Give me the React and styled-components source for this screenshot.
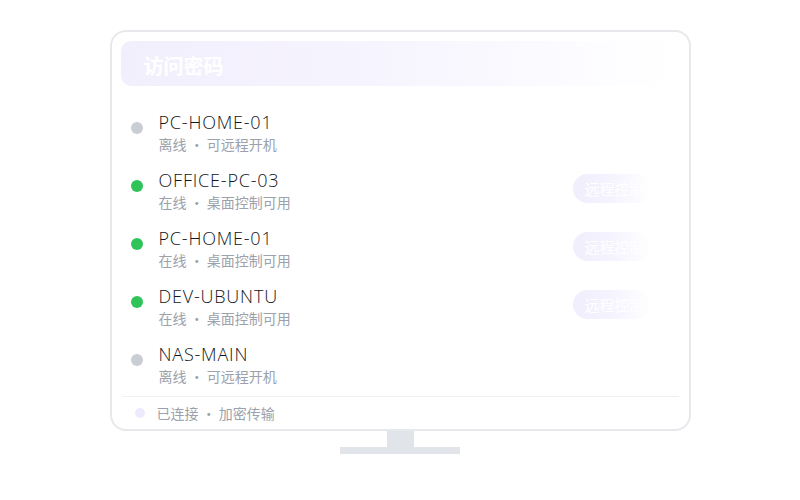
import React from 'react'
import styled, { createGlobalStyle } from 'styled-components'

const Global = createGlobalStyle`
  body {
    margin: 0;
    background: #fff;
    font-family: 'Noto Sans', 'Noto Sans CJK SC', sans-serif;
  }
`

const Stage = styled.div`
  width: 800px;
  height: 500px;
  padding-top: 30px;
  box-sizing: border-box;
  display: flex;
  flex-direction: column;
  align-items: center;
`

const Screen = styled.div`
  width: 581px;
  height: 401px;
  box-sizing: border-box;
  border: 2px solid #e6e8eb;
  border-radius: 16px;
  padding: 9px 10px 0 9px;
  display: flex;
  flex-direction: column;
  background: #fff;
`

const Header = styled.div`
  height: 45px;
  border-radius: 10px;
  background: linear-gradient(90deg, #f2effd 0%, #f6f4fe 45%, #fdfcff 85%, #ffffff 100%);
  display: flex;
  align-items: center;
  padding: 3px 0 0 23px;
  box-sizing: border-box;
  font-family: 'Noto Sans CJK SC', sans-serif;
  font-size: 20px;
  font-weight: 700;
  color: #fff;
`

const List = styled.div`
  margin-top: 18px;
  display: flex;
  flex-direction: column;
`

const Row = styled.div`
  height: 58px;
  display: flex;
  align-items: center;
  padding-left: 10px;
  padding-right: 28px;
`

const Dot = styled.span`
  width: 12px;
  height: 12px;
  border-radius: 50%;
  flex: none;
  margin-top: -10px;
  background: ${p => (p.online ? '#30c35a' : '#c9cdd4')};
`

const Info = styled.div`
  margin-left: 16px;
  display: flex;
  flex-direction: column;
  flex: 1;
`

const Name = styled.div`
  font-family: 'Open Sans', 'Noto Sans', sans-serif;
  font-size: 18px;
  font-weight: 300;
  line-height: 22px;
  margin-top: -2px;
  color: #111622;
  letter-spacing: 0.8px;
`

const Sub = styled.div`
  font-family: 'Noto Sans CJK SC', sans-serif;
  font-size: 14px;
  line-height: 20px;
  margin-top: 1px;
  color: #9ca1ab;
`

const ActionButton = styled.div`
  width: 78px;
  height: 29px;
  border-radius: 15px;
  margin-top: -5px;
  background: linear-gradient(90deg, #f1eefd 0%, #f5f3fe 50%, #ffffff 100%);
  color: #fff;
  font-family: 'Noto Sans CJK SC', serif;
  font-size: 15px;
  display: flex;
  align-items: center;
  padding-left: 12px;
  box-sizing: border-box;
  overflow: hidden;
  white-space: nowrap;
`

const Divider = styled.div`
  height: 1px;
  background: #eef0f3;
  margin: 2px 0 0 1px;
`

const Footer = styled.div`
  flex: 1;
  display: flex;
  align-items: center;
  padding-left: 14px;
  gap: 12px;
  font-family: 'Noto Sans CJK SC', sans-serif;
  font-size: 14px;
  color: #9ca1ab;
`

const FooterDot = styled.span`
  width: 10px;
  height: 10px;
  border-radius: 50%;
  background: #eeeafd;
`

const Neck = styled.div`
  width: 27px;
  height: 16px;
  background: #e1e5e9;
`

const Base = styled.div`
  width: 120px;
  height: 7px;
  background: #e1e5e9;
`

const devices = [
  { name: 'PC-HOME-01', online: false },
  { name: 'OFFICE-PC-03', online: true },
  { name: 'PC-HOME-01', online: true },
  { name: 'DEV-UBUNTU', online: true },
  { name: 'NAS-MAIN', online: false },
]

export default function App() {
  return (
    <>
      <Global />
      <Stage>
        <Screen>
          <Header>访问密码</Header>
          <List>
            {devices.map((d, i) => (
              <Row key={i}>
                <Dot online={d.online} />
                <Info>
                  <Name>{d.name}</Name>
                  <Sub>{d.online ? '在线 · 桌面控制可用' : '离线 · 可远程开机'}</Sub>
                </Info>
                {d.online && <ActionButton>远程控制</ActionButton>}
              </Row>
            ))}
          </List>
          <Divider />
          <Footer>
            <FooterDot />
            已连接 · 加密传输
          </Footer>
        </Screen>
        <Neck />
        <Base />
      </Stage>
    </>
  )
}
